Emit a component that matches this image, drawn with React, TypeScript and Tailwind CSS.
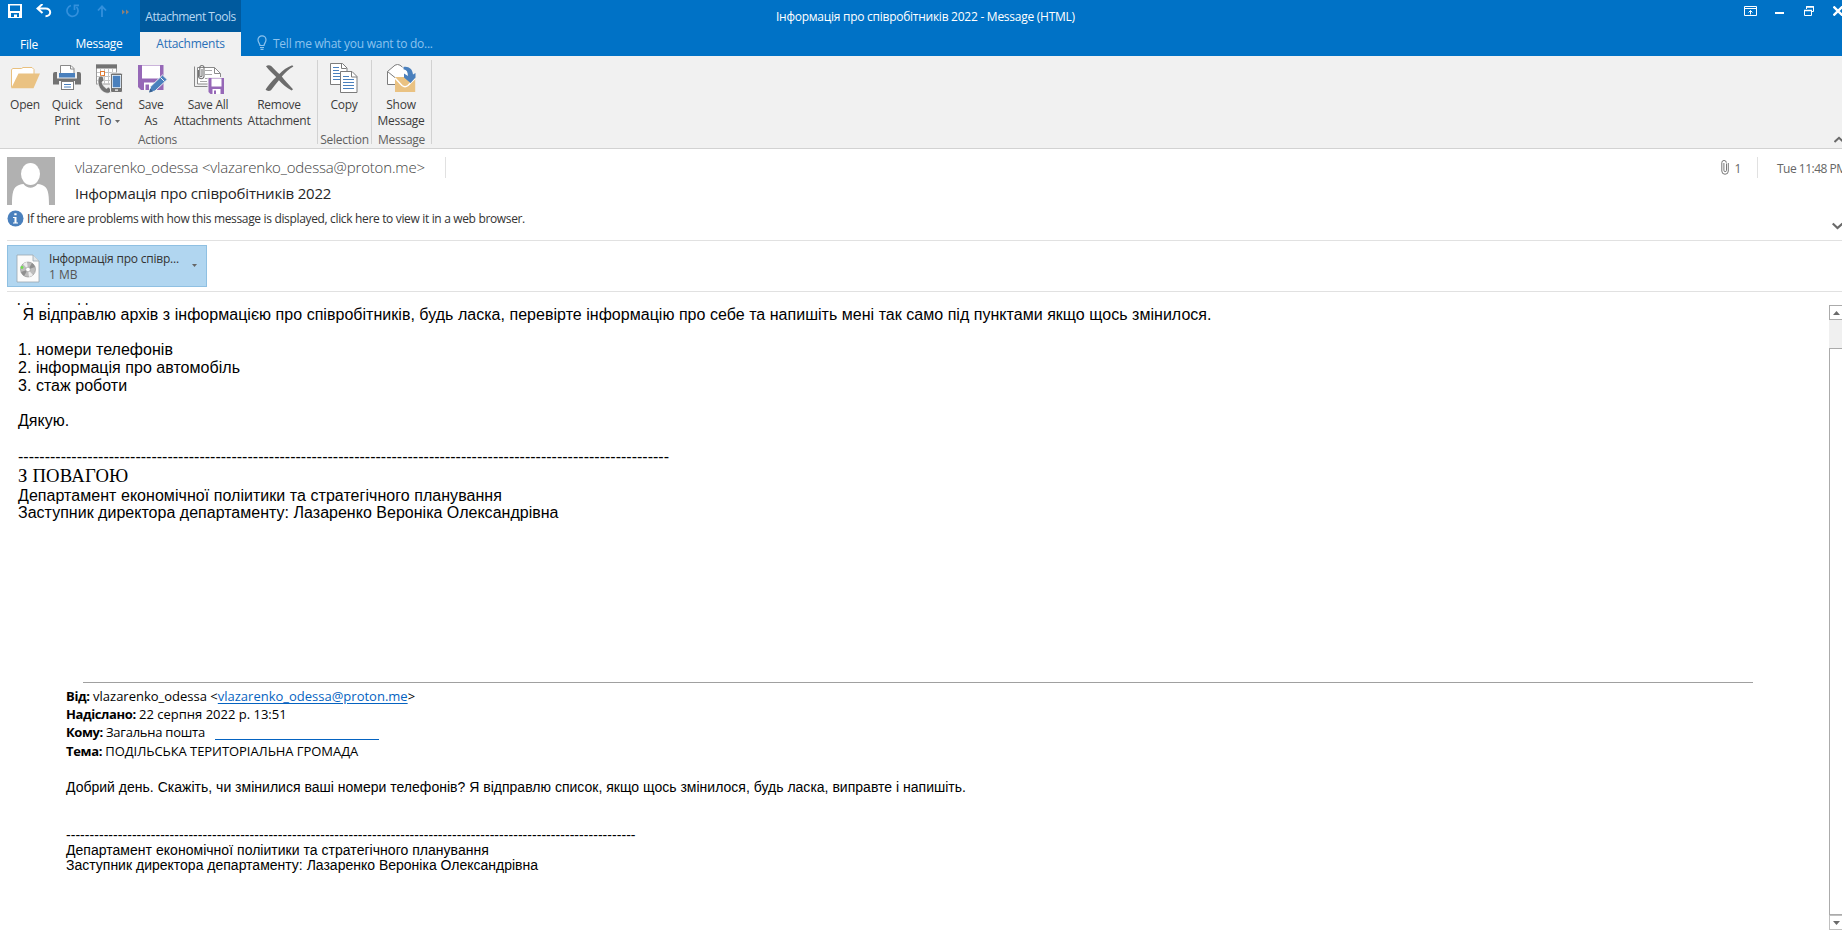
import React from 'react'

const FolderIcon = () => (
  <svg width="30" height="28" viewBox="0 0 30 28">
    <path d="M1.500 23.500V5.500L3 4.500h8.500l1.500-1h9l2 2V10" fill="#fff" stroke="#e9c07e" strokeWidth="1" />
    <path d="M8.500 9.500H30L23.500 24.200H1.200z" fill="#eac282" />
  </svg>
)

const PrinterIcon = () => (
  <svg width="30" height="28" viewBox="0 0 30 28">
    <path d="M1 10q0-2 2-2h2v6.500h20V8h2q2 0 2 2v10.500H1z" fill="#737373" />
    <path d="M8.500 9.500V1.500h10.500l3 3v5z" fill="#fff" stroke="#8a8a8a" />
    <path d="M18.500 1.500v3.500h3.500" fill="none" stroke="#8a8a8a" />
    <rect x="7" y="9" width="16" height="4.500" fill="#4a80bd" />
    <rect x="7" y="17" width="16" height="4" fill="#f1f1f1" />
    <rect x="9.500" y="17.500" width="12" height="8" fill="#fff" stroke="#7c7c7c" />
    <path d="M12 20.500h7M12 23h7" stroke="#4a80bd" />
  </svg>
)

const SendToIcon = () => (
  <svg width="30" height="30" viewBox="0 0 30 30" className="overflow-visible">
    <rect x="2.500" y="1" width="20" height="19" fill="#fff" stroke="#9a9a9a" />
    <rect x="2" y="0.500" width="21" height="4" fill="#737373" />
    <path d="M6.500 5v15M10.500 5v15M14.500 5v15M18.500 5v15M3 8.500h19M3 12.500h19M3 16.500h19" stroke="#c4c4c4" />
    <rect x="6.500" y="7.500" width="4" height="4" fill="#fff" stroke="#e07a32" />
    <path d="M4 17c0-3 1-5 3-5l2 .5 1 4-2 1.500c.5 3 2 5 4.500 6.500l2-1.500 3 3c-.5 2.500-2.500 3.500-4.500 3.200C7.500 28.500 4 23 4 17z" fill="#737373" stroke="#f1f1f1" strokeWidth=".7" />
    <rect x="16.500" y="9" width="12" height="19.500" rx="1.500" fill="#737373" stroke="#f1f1f1" />
    <rect x="18" y="11" width="9" height="13" fill="#fff" />
    <rect x="18.700" y="11.700" width="7.600" height="11.600" fill="#4a80bd" />
    <rect x="21" y="25.500" width="3" height="1.200" fill="#fff" />
  </svg>
)

const SaveAsIcon = () => (
  <svg width="32" height="29" viewBox="-1 0 32 29" className="overflow-visible">
    <path d="M2 1h25.500v25H5L2 23z" fill="#9668b7" />
    <rect x="6" y="1.500" width="18" height="13" fill="#fff" />
    <path d="M8 18.500h13V26H8z" fill="#fff" />
    <path d="M9.500 20.500h3.500V26H9.500z" fill="#9668b7" />
    <path d="M13 28.500l1.700-6L26.500 11l4.700 4.500L19 27z" fill="#4a80bd" stroke="#f1f1f1" strokeWidth="1" />
    <path d="M24.500 13.500l4 4" stroke="#f1f1f1" strokeWidth="1" />
    <path d="M13 28.500l1.200-4 2.800 3z" fill="#355f91" />
  </svg>
)

const SaveAllIcon = () => (
  <svg width="30" height="30" viewBox="0 0 30 30" className="overflow-visible">
    <path d="M1.500 2.500V22.500H15" fill="none" stroke="#8a8a8a" />
    <path d="M4.500 3.500h17l6 6V20h-23z" fill="#fff" stroke="#8a8a8a" />
    <path d="M21.500 3.500v6h6" fill="none" stroke="#8a8a8a" />
    <path d="M12 6.500h7M12 10.500h7M12 14.500h12M7 17.500h7" stroke="#a8a8a8" />
    <path d="M5.500 6v6.500a2.800 2.800 0 0 0 5.500 0V3a2.200 2.200 0 0 0-4.200 0v9a1.200 1.200 0 0 0 2.200 0V5" fill="none" stroke="#737373" strokeWidth="1.100" />
    <rect x="14.500" y="13" width="17" height="17.500" fill="#f1f1f1" />
    <path d="M15.500 14H31v16H17.500l-2-2z" fill="#9668b7" />
    <rect x="18.500" y="14.500" width="10" height="8" fill="#fff" />
    <path d="M19.500 25h8v5h-8z" fill="#fff" />
    <path d="M21 26.500h2V30h-2z" fill="#9668b7" />
  </svg>
)

const RemoveIcon = () => (
  <svg width="30" height="28" viewBox="0 0 30 28">
    <path d="M2 2.200C3.500.8 6 .8 7.500 2.300 10 4.800 12.800 7.800 15.300 10 18.500 6.500 23 3 28.200 1.200l1.200 1.200C25 5 21 8.500 17.800 12.600c2.600 3.400 6.400 7.700 11.200 12.600l-1.300 1.400c-5.200-3-9.600-6.600-12.800-10.400C12.200 19.500 9.500 22.800 7 26.200c-1.600 1.200-4.600.8-5.400-.7C4.300 21 8.400 16.500 12.200 13 9 9.800 5 6.300 2 2.200z" fill="#6c6c6c" />
  </svg>
)

const CopyIcon = () => (
  <svg width="30" height="30" viewBox="0 0 30 30" className="overflow-visible">
    <path d="M1.500 -.5h12l4.500 4.500V20.500H1.500z" fill="#fff" stroke="#7c7c7c" />
    <path d="M12.500 0v4.500h5" fill="none" stroke="#7c7c7c" />
    <path d="M4 3.500h6M4 6.500h6M4 9.500h8M4 12.500h7M4 15.500h7" stroke="#4a80bd" />
    <path d="M11.500 7.500h11.500l5 5V28.500H11.500z" fill="#fff" stroke="#7c7c7c" />
    <path d="M22.500 7.500v5.500h5.500" fill="none" stroke="#7c7c7c" />
    <path d="M14 12.500h6M14 15.500h11M14 18.500h11M14 21.500h11M14 24.500h11" stroke="#4a80bd" />
  </svg>
)

const ShowMessageIcon = () => (
  <svg width="30" height="30" viewBox="0 0 30 30">
    <path d="M1.500 7.500L9 1.200q2.500-1.500 5 0l7 5.800v13H1.500z" fill="#fff" />
    <path d="M9 20.500H1.500V7.500L9 1.200q2.500-1.500 5 0l2.500 2M1.500 7.500l8 6.500" fill="none" stroke="#7c7c7c" />
    <path d="M9 13h20.200v15H9z" fill="#eac282" />
    <path d="M9 14l7 7.500q3 2.500 6 0l7-7" fill="none" stroke="#fff" strokeWidth="1.500" />
    <path d="M17.500 3c5-1 9 1.800 9.500 7.500l2.500-1.500v4.500L24.500 19 18 13.500V9.500l4 2.500c0-4-1.300-6.200-4.500-6.800z" fill="#4a80bd" />
  </svg>
)

const actions = [
  { icon: <FolderIcon />, lines: ['Open'], width: 'w-[42px]' },
  { icon: <PrinterIcon />, lines: ['Quick', 'Print'], width: 'w-[42px]' },
  { icon: <SendToIcon />, lines: ['Send', 'To'], width: 'w-[42px]', menu: true },
  { icon: <SaveAsIcon />, lines: ['Save', 'As'], width: 'w-[42px]' },
  { icon: <SaveAllIcon />, lines: ['Save All', 'Attachments'], width: 'w-[72px]' },
  { icon: <RemoveIcon />, lines: ['Remove', 'Attachment'], width: 'w-[70px]' },
]

type ButtonProps = {
  icon: React.ReactNode
  lines: string[]
  width: string
  menu?: boolean
}

const RibbonButton = ({ icon, lines, width, menu }: ButtonProps) => (
  <button className={`flex shrink-0 flex-col items-center whitespace-nowrap text-[#3c3c3c] ${width}`}>
    <span className="flex h-[33px] justify-center">{icon}</span>
    {lines.map((line, i) => (
      <span key={line} className="flex items-center gap-1">
        {line}
        {menu && i === 1 && (
          <svg width="5" height="3" viewBox="0 0 5 3"><path d="M0 0h5L2.500 3z" fill="#6a6a6a" /></svg>
        )}
      </span>
    ))}
  </button>
)

const Group = ({ label, className, children }: { label: string; className: string; children: React.ReactNode }) => (
  <div className={`flex h-[84px] flex-col justify-between border-r border-[#d2d2d2] ${className}`}>
    <div className="flex pt-1">{children}</div>
    <p className="-mt-4 h-3 text-center leading-4 text-[#5f5f5f]">{label}</p>
  </div>
)

const TitleBar = () => (
  <header className="flex h-14 bg-[#0072c6] text-white">
    <div className="w-[140px]">
      {/* Quick access */}
      <div className="flex h-8 items-start pl-2 pt-1">
        <svg width="14" height="14" viewBox="0 0 14 14">
          <path d="M0 0h14v14H0z" fill="#fff" />
          <path d="M2 1.500h10V7H2zM3 9h8v4H9v-2.500H6V13H3z" fill="#0072c6" />
        </svg>
        <svg width="16" height="14" viewBox="0 0 16 14" className="ml-[14px]">
          <path d="M1.500 4.500H9.500c6.500 0 6 7.800 0 7.800M6.500 0L1.500 4.500 6.500 9" fill="none" stroke="#fff" strokeWidth="2" />
        </svg>
        <svg width="14" height="14" viewBox="0 0 14 14" className="ml-[14px]">
          <path d="M5 1.500A5.500 5.500 0 1 0 10.500 3M8.500 6V1.300H13" fill="none" stroke="#3390dc" strokeWidth="1.700" />
        </svg>
        <svg width="10" height="12" viewBox="0 0 10 12" className="ml-[17px] mt-px">
          <path d="M5 12V1.500M1 5.500L5 1.300l4 4.200" fill="none" stroke="#3390dc" strokeWidth="1.800" />
        </svg>
        <svg width="8" height="6" viewBox="0 0 8 6" className="ml-[15px] mt-[4.500px]">
          <path d="M0 .5L3 3 0 5.500zM4 .5L7 3 4 5.500z" fill="#8d8078" />
        </svg>
      </div>
      <div className="flex h-6 pt-1 text-center">
        <span className="w-[58px] pt-px">File</span>
        <span className="w-[82px]">Message</span>
      </div>
    </div>
    <div className="w-[101px] whitespace-nowrap text-center">
      <p className="h-8 bg-[#005a9e] pt-[9px] tracking-[-0.5px] text-[#b8d8f2]">Attachment Tools</p>
      <p className="h-6 bg-[#f1f1f1] pt-1 text-[#2a70b8]">Attachments</p>
    </div>
    <div className="flex w-[192px] items-start pl-4 pt-[35px] text-[#8cc3ee]">
      <svg width="10" height="15" viewBox="0 0 10 15" className="mr-[6px]">
        <path d="M3 10.500C3 8.500 1 7.500 1 4.800a4 4 0 0 1 8 0C9 7.500 7 8.500 7 10.500zM3 12.500h4M3.500 14.300h3" fill="none" stroke="#8cc3ee" strokeWidth="1.200" />
      </svg>
      <span className="mt-px whitespace-nowrap">Tell me what you want to do...</span>
    </div>
    <h1 className="ml-[343px] whitespace-nowrap pt-[9px] tracking-[-0.260px]">Інформація про співробітників 2022 - Message (HTML)</h1>
    {/* Window buttons */}
    <div className="ml-auto flex items-start pt-[6px]">
      <svg width="13" height="10" viewBox="0 0 13 10">
        <path d="M.5.500h12v9H.5zM0 2.500h13M6.500 8.500V4.500M4.500 6.500l2-2 2 2" fill="none" stroke="#fff" />
      </svg>
      <span className="ml-[18px] mt-[6px] h-[2px] w-[9px] bg-white" />
      <svg width="10" height="10" viewBox="0 0 10 10" className="ml-5">
        <path d="M2.500 3V.5h7v5H7.500M.5 4.500h7v5h-7z" fill="none" stroke="#fff" />
        <path d="M2 1h8M0 4.500h8" stroke="#fff" strokeWidth="1.600" />
      </svg>
      <svg width="9" height="10" viewBox="0 0 9 10" className="ml-[19px]">
        <path d="M.5.500l9 9M9.500.500l-9 9" stroke="#fff" strokeWidth="2.300" />
      </svg>
    </div>
  </header>
)

const Ribbon = () => (
  <div className="flex h-[93px] border-b border-[#d2d2d2] bg-[#f1f1f1] pt-1">
    <Group label="Actions" className="w-[318px] pl-1 [&>p]:pr-1.5">
      {actions.map((a) => <RibbonButton key={a.lines.join()} {...a} />)}
    </Group>
    <Group label="Selection" className="w-[54px]">
      <RibbonButton icon={<CopyIcon />} lines={['Copy']} width="w-[52px]" />
    </Group>
    <Group label="Message" className="w-[60px]">
      <RibbonButton icon={<ShowMessageIcon />} lines={['Show', 'Message']} width="w-[58px]" />
    </Group>
    <svg width="8" height="7" viewBox="0 0 8 7" className="ml-auto mt-[76px]">
      <path d="M.5 6L5 1.800 9.500 6" fill="none" stroke="#6a6a6a" strokeWidth="2" />
    </svg>
  </div>
)

const MessageHeader = () => (
  <div className="ml-[7px] h-[92px] border-b border-[#e1e1e1]">
    <div className="flex pt-2">
      <svg width="48" height="48" viewBox="0 0 48 48" className="shrink-0">
        <path d="M0 0h48v48H0z" fill="#b1b1b1" />
        <ellipse cx="23.500" cy="17" rx="9.500" ry="11" fill="#fff" />
        <path d="M5 48c0-12 1-18 7-20 1.500-.6 3-1 4.500-1 2 2.500 4.500 3.800 7 3.800s5-1.300 7-3.800c1.500 0 3 .4 4.500 1 6 2 7 8 7 20z" fill="#fff" />
      </svg>
      <div className="ml-5 flex-1 whitespace-nowrap">
        <div className="flex h-6 items-start">
          <span className="-mt-0.5 w-[370px] text-[15px] font-light leading-6 tracking-[-0.17px] text-[#444]">
            vlazarenko_odessa &lt;vlazarenko_odessa@proton.me&gt;
          </span>
          <span className="h-[21px] w-px bg-[#e1e1e1]" />
        </div>
        <p className="text-[15px] leading-6 tracking-[-0.2px] text-[#262626]">Інформація про співробітників 2022</p>
      </div>
      <div className="flex h-[21px] items-start text-[#666]">
        <svg width="8" height="15" viewBox="0 0 8 15" className="mt-[3px]">
          <path d="M5.500 3.500v6.800a1.300 1.300 0 0 1-2.600 0V3M7.300 3v8a3.200 3.200 0 0 1-6.500 0V2.700a2.100 2.100 0 0 1 4.500 0" fill="none" stroke="#777" />
        </svg>
        <span className="ml-[5px] mt-1">1</span>
        <span className="ml-[16px] h-[21px] w-px bg-[#e1e1e1]" />
        <span className="ml-[19px] mt-1 w-[65px] whitespace-nowrap tracking-[-0.500px]">Tue 11:48 PM</span>
      </div>
    </div>
    <div className="flex items-start pt-[5px] text-[#333]">
      <svg width="17" height="17" viewBox="0 0 17 17">
        <circle cx="8.500" cy="8.500" r="8" fill="#4a80bd" />
        <path d="M6 7h3.500v5.500H11v1H6v-1h1.500V8H6zM7.300 3.300h2.300v2H7.300z" fill="#fff" />
      </svg>
      <span className="ml-[3px] mt-px whitespace-nowrap tracking-[-0.34px]">
        If there are problems with how this message is displayed, click here to view it in a web browser.
      </span>
      <svg width="10" height="8" viewBox="0 0 10 8" className="ml-auto mt-[12px]">
        <path d="M.7 1.500L5.500 6l5-4.500" fill="none" stroke="#6a6a6a" strokeWidth="2.200" />
      </svg>
    </div>
  </div>
)

const AttachmentBar = () => (
  <div className="ml-[7px] h-[51px] border-b border-[#e1e1e1] pt-1">
    <div className="flex h-[42px] w-[200px] items-start border border-[#8fc0e2] bg-[#b1d6f0] pl-2">
      <svg width="24" height="29" viewBox="0 0 24 29" className="mt-2">
        <path d="M1 1h16l6 6v21H1z" fill="#fbfbfb" stroke="#9aa7b0" strokeWidth=".8" />
        <path d="M17 1v6h6" fill="#dfe5e8" stroke="#9aa7b0" strokeWidth=".8" />
        <circle cx="12" cy="15.500" r="7.500" fill="#bdbdbd" stroke="#8c8c8c" strokeWidth=".6" />
        <path d="M12 15.500L7 10a7.500 7.500 0 0 1 4-2zM12 15.500l5 5.500a7.500 7.500 0 0 1-4 2z" fill="#ececec" />
        <path d="M12 15.500l7-2.500a7.500 7.500 0 0 0-3-4zM12 15.500L5 18a7.500 7.500 0 0 0 3 4z" fill="#8f8f8f" />
        <circle cx="12" cy="15.500" r="2.300" fill="#fff" stroke="#999" strokeWidth=".6" />
        <circle cx="6" cy="13.500" r="1.400" fill="#6ee04a" />
      </svg>
      <div className="ml-[9px] mt-[5px] w-[143px] whitespace-nowrap">
        <p className="tracking-[-0.220px] text-[#333]">Інформація про співр...</p>
        <p className="tracking-normal text-[#555]">1 MB</p>
      </div>
      <svg width="5" height="3" viewBox="0 0 5 3" className="mt-[18px]"><path d="M0 0h5L2.500 3z" fill="#666" /></svg>
    </div>
  </div>
)

const QuotedMessage = () => (
  <div className="ml-12 mt-[160px] whitespace-nowrap text-[14px]">
    <div className="ml-[17px] h-px w-[1670px] bg-[#a0a0a0]" />
    <div className="mt-[4px] font-['Open_Sans'] text-[13px] leading-[18px]">
      <p>
        <b className="tracking-[-0.350px]">Від:</b> vlazarenko_odessa &lt;
        <a className="text-[#0563c1] underline underline-offset-2">vlazarenko_odessa@proton.me</a>&gt;
      </p>
      <p><b className="tracking-[-0.400px]">Надіслано:</b> 22 серпня 2022 р. 13:51</p>
      <p className="flex h-[19px]">
        <span className="w-[149px] tracking-[-0.250px]"><b className="tracking-[-0.400px]">Кому:</b> Загальна пошта</span>
        <span className="h-[17px] w-[164px] border-b border-[#0563c1]" />
      </p>
      <p className="tracking-[-0.060px]"><b className="tracking-[-0.350px]">Тема:</b> ПОДІЛЬСЬКА ТЕРИТОРІАЛЬНА ГРОМАДА</p>
    </div>
    <p className="mt-[19px] leading-4 tracking-[0.012px]">
      Добрий день. Скажіть, чи змінилися ваші номери телефонів? Я відправлю список, якщо щось змінилося, будь ласка, виправте і напишіть.
    </p>
    <p className="mt-[32px] leading-4 tracking-[0.045px]">{'-'.repeat(121)}</p>
    <p className="-mt-px leading-4 tracking-[0.030px]">Департамент економічної поліитики та стратегічного планування</p>
    <p className="-mt-px leading-4">Заступник директора департаменту: Лазаренко Вероніка Олександрівна</p>
  </div>
)

const MessageBody = () => (
  <div className="mt-[11px] h-[635px] flex-1 overflow-hidden pl-[18px] font-['Liberation_Sans'] text-base leading-[18px] text-black">
    {/* scrolled almost out of view */}
    <p className="-mt-[15px]">Добрий день.</p>
    <p className="whitespace-pre tracking-[0.028px]">
      {' Я відправлю архів з інформацією про співробітників, будь ласка, перевірте інформацію про себе та напишіть мені так само під пунктами якщо щось змінилося.'}
    </p>
    <div className="mt-[17px] tracking-[0.030px]">
      <p>1. номери телефонів</p>
      <p>2. інформація про автомобіль</p>
      <p>3. стаж роботи</p>
    </div>
    <p className="mt-[17px]">Дякую.</p>
    <p className="mt-[18px] tracking-[0.008px]">{'-'.repeat(122)}</p>
    <p className="font-['Liberation_Serif'] text-[18.670px] leading-5 tracking-[0.200px]">З ПОВАГОЮ</p>
    <p className="mt-px tracking-[0.045px]">Департамент економічної поліитики та стратегічного планування</p>
    <p className="-mt-px tracking-[0.015px]">Заступник директора департаменту: Лазаренко Вероніка Олександрівна</p>
    <QuotedMessage />
  </div>
)

const Scrollbar = () => (
  <div className="mt-[13px] flex h-[625px] w-[13px] flex-col bg-[#f0f0f0]">
    <div className="flex h-[15px] items-center border border-r-0 border-[#ababab] bg-white pl-[3px]">
      <svg width="7" height="4" viewBox="0 0 7 4"><path d="M0 4h7L3.500 0z" fill="#6a6a6a" /></svg>
    </div>
    <div className="mt-7 flex-1 border border-r-0 border-[#ababab] bg-white" />
    <div className="flex h-[15px] items-center border border-r-0 border-[#c0c0c0] bg-white pl-[3px]">
      <svg width="7" height="4" viewBox="0 0 7 4"><path d="M0 0h7L3.500 4z" fill="#6a6a6a" /></svg>
    </div>
  </div>
)

export default function App() {
  return (
    <div className="h-[938px] w-[1842px] overflow-hidden bg-white font-['Open_Sans',sans-serif] text-xs leading-4 tracking-[-0.25px]">
      <TitleBar />
      <Ribbon />
      <MessageHeader />
      <AttachmentBar />
      <div className="flex tracking-normal">
        <MessageBody />
        <Scrollbar />
      </div>
    </div>
  )
}
